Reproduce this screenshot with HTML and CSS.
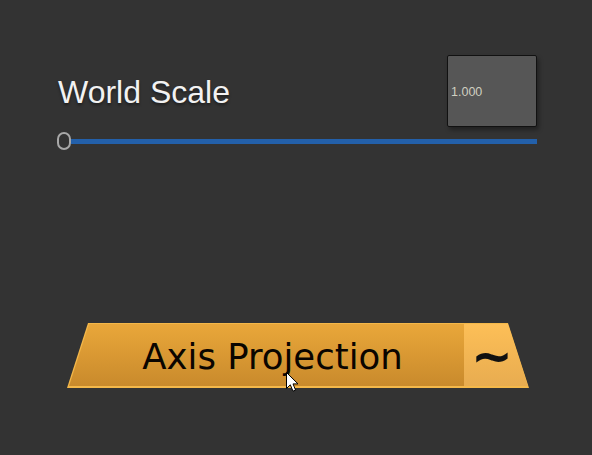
FILE: index.html
```html
<!DOCTYPE html>
<html>
<head>
<meta charset="utf-8">
<link rel="stylesheet" href="styles.css">
</head>
<body>
<div class="panel">
  <div class="header">
    <div class="label">World Scale</div>
    <div class="numbox">1.000</div>
  </div>
  <div class="slider">
    <div class="handle"></div>
    <div class="track"></div>
  </div>
  <div class="button-wrap">
    <div class="button">
      <div class="button-inner">
        <div class="main">Axis Projection</div>
        <div class="tilde">~</div>
      </div>
    </div>
    <svg class="cursor" width="14" height="22" viewBox="0 0 14 22">
      <path d="M0.5 0.5 L0.5 16.5 L4.3 12.8 L7 19.2 L9.6 18.1 L7 11.9 L12 11.9 Z" fill="#fff" stroke="#000" stroke-width="1"/>
    </svg>
  </div>
</div>
</body>
</html>
```
FILE: styles.css
```css
html, body {
  margin: 0;
  padding: 0;
  background: #333333;
  width: 592px;
  height: 455px;
  overflow: hidden;
}
.panel {
  padding: 55px 55px 0 57px;
}
.header {
  display: flex;
  justify-content: space-between;
  align-items: center;
}
.label {
  font-family: "Liberation Sans", Arial, sans-serif;
  font-size: 32px;
  line-height: 36px;
  color: #f2f2f2;
  padding-left: 1px;
  padding-top: 1px;
  text-shadow: 0 2px 3px rgba(0,0,0,0.45);
}
.numbox {
  width: 85px;
  height: 70px;
  background: #565656;
  border: 1px solid #111;
  border-radius: 2px;
  box-shadow: 2px 3px 4px rgba(0,0,0,0.35);
  font-family: "Liberation Sans", Arial, sans-serif;
  font-size: 12.5px;
  color: #cfcfc0;
  display: flex;
  align-items: center;
  padding-left: 3px;
  padding-top: 2px;
  height: 68px;
  box-sizing: content-box;
}
.slider {
  margin-top: 5px;
  height: 18px;
  display: flex;
  align-items: center;
}
.handle {
  width: 10px;
  height: 14px;
  border: 2px solid #a8a8a8;
  border-radius: 8px;
  flex: none;
}
.track {
  flex: 1;
  height: 5px;
  background: #2360aa;
}
.button-wrap {
  position: relative;
  margin-top: 173px;
  margin-left: 10px;
  width: 462px;
}
.button {
  width: 462px;
  height: 65px;
  background: #f4b84a;
  clip-path: polygon(21px 0, 441px 0, 462px 65px, 0 65px);
  padding: 1px 1px 2px 2px;
  box-sizing: border-box;
}
.button-inner {
  height: 100%;
  display: flex;
  clip-path: polygon(20px 0, 439px 0, 459px 62px, 0 62px);
}
.main {
  flex: 1;
  background: linear-gradient(#e9a73a, #c98a2c);
  font-family: "DejaVu Sans", Verdana, sans-serif;
  font-size: 35.5px;
  color: #0a0500;
  display: flex;
  align-items: center;
  justify-content: center;
  padding-left: 12px;
  padding-top: 2px;
}
.tilde {
  width: 64px;
  flex: none;
  background: linear-gradient(#fdbf57, #e8ac50);
  font-family: "DejaVu Sans", Verdana, sans-serif;
  font-weight: bold;
  font-size: 50px;
  color: #111;
  display: flex;
  align-items: center;
  justify-content: flex-start;
  padding-left: 7px;
  padding-top: 1px;
  box-sizing: border-box;
}
.cursor {
  position: absolute;
  left: 219px;
  top: 49px;
}
```
